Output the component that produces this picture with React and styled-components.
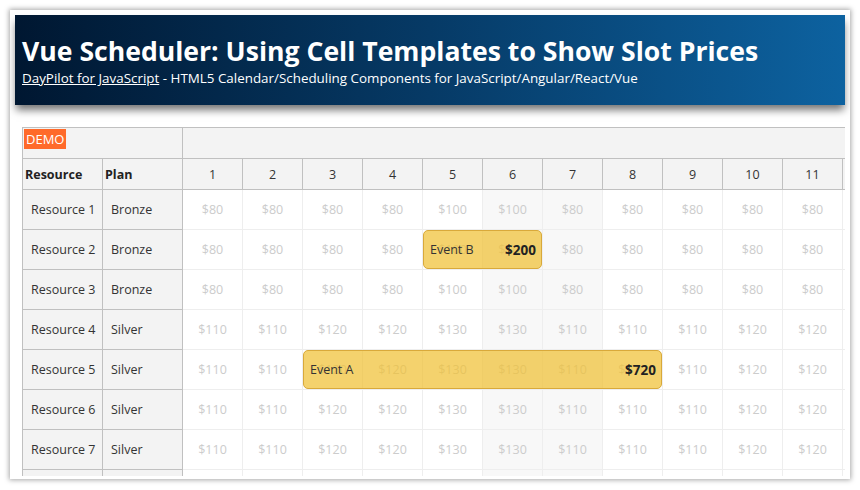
import styled, { createGlobalStyle } from "styled-components";

const GlobalStyle = createGlobalStyle`
  html, body {
    margin: 0;
    padding: 0;
    background: #ffffff;
  }
  body {
    font-family: "Open Sans", "Noto Sans", sans-serif;
  }
`;

const bronze = [80, 80, 80, 80, 100, 100, 80, 80, 80, 80, 80, 80];
const silver = [110, 110, 120, 120, 130, 130, 110, 110, 110, 120, 120, 120];

const resources = [
  { name: "Resource 1", plan: "Bronze", prices: bronze },
  { name: "Resource 2", plan: "Bronze", prices: bronze, event: { text: "Event B", price: 200, start: 4, end: 6 } },
  { name: "Resource 3", plan: "Bronze", prices: bronze },
  { name: "Resource 4", plan: "Silver", prices: silver },
  { name: "Resource 5", plan: "Silver", prices: silver, event: { text: "Event A", price: 720, start: 2, end: 8 } },
  { name: "Resource 6", plan: "Silver", prices: silver },
  { name: "Resource 7", plan: "Silver", prices: silver },
  { name: "Resource 8", plan: "Silver", prices: silver },
];

const days = [1, 2, 3, 4, 5, 6, 7, 8, 9, 10, 11, 12];
const CELL = 60;

const App = () => {
  return (
    <>
      <GlobalStyle />
      <Card>
        <Header>
          <Title>Vue Scheduler: Using Cell Templates to Show Slot Prices</Title>
          <Subtitle>
            <a href="#">DayPilot for JavaScript</a> - HTML5 Calendar/Scheduling Components for JavaScript/Angular/React/Vue
          </Subtitle>
        </Header>
        <Main>
          <Scheduler>
            <TopRow>
              <Corner>
                <Demo>DEMO</Demo>
              </Corner>
              <GroupHeader />
            </TopRow>
            <HeaderRow>
              <ColumnTitle>Resource</ColumnTitle>
              <ColumnTitle>Plan</ColumnTitle>
              {days.map((d) => (
                <DayHeader key={d}>{d}</DayHeader>
              ))}
            </HeaderRow>
            {resources.map((r) => (
              <Row key={r.name}>
                <RowHeader>{r.name}</RowHeader>
                <RowHeader>{r.plan}</RowHeader>
                <Cells>
                  {r.prices.map((p, i) => (
                    <Cell key={i} $weekend={i === 5 || i === 6}>
                      ${p}
                    </Cell>
                  ))}
                  {r.event && (
                    <Event
                      style={{
                        left: r.event.start * CELL,
                        width: (r.event.end - r.event.start) * CELL - 1,
                      }}
                    >
                      <span>{r.event.text}</span>
                      <EventPrice>${r.event.price}</EventPrice>
                    </Event>
                  )}
                </Cells>
              </Row>
            ))}
          </Scheduler>
        </Main>
      </Card>
    </>
  );
};

const Card = styled.div`
  margin: 10px;
  width: 840px;
  height: 469px;
  box-sizing: border-box;
  padding: 5px;
  background: #fff;
  box-shadow: 0 0 5px 1px rgba(0, 0, 0, 0.35);
  overflow: hidden;
  display: flex;
  flex-direction: column;
`;

const Header = styled.div`
  height: 90px;
  flex-shrink: 0;
  box-sizing: border-box;
  padding: 19px 7px 0;
  background: linear-gradient(90deg, #001731 0%, #063a66 50%, #0d62a0 100%);
  box-shadow: 0 6px 8px -1px rgba(0, 0, 0, 0.55);
  color: #fff;
  position: relative;
  z-index: 1;
`;

const Title = styled.h1`
  margin: 0;
  font-size: 26.6px;
  font-weight: 700;
  line-height: 35px;
`;

const Subtitle = styled.div`
  font-size: 13.4px;
  line-height: 18px;

  a {
    color: #fff;
    text-decoration: underline;
  }
`;

const Main = styled.div`
  padding: 22px 0 0 7px;
  flex: 1;
  min-height: 0;
  display: flex;
`;

const Scheduler = styled.div`
  width: 822px;
  height: 348px;
  border-top: 1px solid #c0c0c0;
  border-left: 1px solid #c0c0c0;
  overflow: hidden;
  font-size: 12.5px;
  color: #333;
`;

const TopRow = styled.div`
  display: flex;
  height: 30px;
  border-bottom: 1px solid #c0c0c0;
  background: #f3f3f3;
  width: max-content;
`;

const Corner = styled.div`
  width: 160px;
  box-sizing: border-box;
  border-right: 1px solid #c0c0c0;
  padding: 1px;
`;

const Demo = styled.span`
  display: inline-block;
  background: #ff6a2a;
  color: #fff;
  font-size: 13px;
  line-height: 20px;
  padding: 0 2px;
`;

const GroupHeader = styled.div`
  width: 720px;
`;

const HeaderRow = styled.div`
  display: flex;
  height: 30px;
  border-bottom: 1px solid #c0c0c0;
  background: #f3f3f3;
  width: max-content;
`;

const ColumnTitle = styled.div`
  width: 80px;
  box-sizing: border-box;
  border-right: 1px solid #c0c0c0;
  display: flex;
  align-items: center;
  padding-left: 2px;
  font-weight: 700;
  color: #222;
`;

const DayHeader = styled.div`
  width: ${CELL}px;
  box-sizing: border-box;
  border-right: 1px solid #c0c0c0;
  display: flex;
  align-items: center;
  justify-content: center;
`;

const Row = styled.div`
  display: flex;
  height: 40px;
  width: max-content;
`;

const RowHeader = styled.div`
  width: 80px;
  box-sizing: border-box;
  background: #f3f3f3;
  border-right: 1px solid #c0c0c0;
  border-bottom: 1px solid #c0c0c0;
  display: flex;
  align-items: center;
  padding-left: 8px;
`;

const Cells = styled.div`
  display: flex;
  position: relative;
`;

const Cell = styled.div`
  width: ${CELL}px;
  box-sizing: border-box;
  border-right: 1px solid #eeeeee;
  border-bottom: 1px solid #eeeeee;
  background: ${(p) => (p.$weekend ? "#f8f8f8" : "#ffffff")};
  color: #cccccc;
  display: flex;
  align-items: center;
  justify-content: center;
`;

const Event = styled.div`
  position: absolute;
  top: 0;
  height: 39px;
  box-sizing: border-box;
  background: rgba(240, 192, 52, 0.72);
  border: 1px solid #d9a93a;
  border-radius: 5px;
  display: flex;
  align-items: center;
  justify-content: space-between;
  padding: 0 5px 0 6px;
  color: #333;
`;

const EventPrice = styled.span`
  font-weight: 700;
  font-size: 13.5px;
  color: #222;
`;

export default App;
